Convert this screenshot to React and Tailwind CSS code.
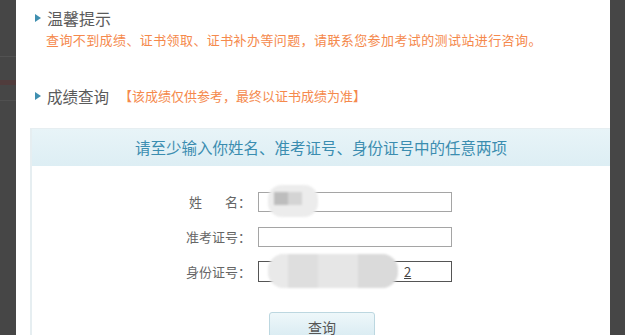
import React from "react";

const Tri = () => (
  <svg width="6" height="8" viewBox="0 0 6 8" className="shrink-0">
    <polygon points="0,0 6,4 0,8" fill="#3f8fb0" />
  </svg>
);

export default function App() {
  const font = { fontFamily: '"Noto Sans CJK SC", "Noto Sans", sans-serif' };
  return (
    <div className="flex h-[335px] w-[625px] overflow-hidden bg-white" style={font}>
      <div className="w-[16px] shrink-0 bg-[#464646] flex flex-col">
        <div className="h-[56px]" />
        <div className="h-[1px] bg-[#525252]" />
        <div className="h-[23px]" />
        <div className="h-[5px] bg-[#503c3c]" />
        <div className="h-[15px]" />
        <div className="h-[1px] bg-[#505050]" />
      </div>
      <div className="flex-1 relative flex flex-col pl-[14px]">
        <div className="flex items-center gap-[6px] pl-[5px] pt-[8px] h-[28px]">
          <Tri />
          <span className="text-[16px] leading-[20px] text-[#5a5a5a]">温馨提示</span>
        </div>
        <div className="pl-[16px] mt-[2px] text-[13px] leading-[20px] text-[#f5894c] tracking-[0.4px]">
          查询不到成绩、证书领取、证书补办等问题，请联系您参加考试的测试站进行咨询。
        </div>
        <div className="flex items-center gap-[6px] pl-[5px] mt-[36px] h-[20px]">
          <Tri />
          <span className="text-[15.5px] leading-[20px] text-[#5a5a5a]">成绩查询</span>
          <span className="ml-[4px] text-[13px] leading-[20px] text-[#f5894c]">【该成绩仅供参考，最终以证书成绩为准】</span>
        </div>
        <div className="ml-[2px] mt-[5px] h-[1px] bg-[#e4e4e4]" />
        <div className="mt-[17px] flex-1 border-l-2 border-t border-[#e6eef1] flex flex-col">
          <div className="h-[37px] flex items-center justify-center bg-gradient-to-b from-[#e8f4f8] to-[#ddeef4] text-[15.5px] text-[#3b8db0]">
            请至少输入你姓名、准考证号、身份证号中的任意两项
          </div>
          <div className="flex flex-col pt-[25px] gap-[14px]">
            <div className="flex items-center h-[21px]">
              <div className="w-[226px] pr-[7px] flex justify-end text-[13px] text-[#666]">
                <span className="flex w-[62px] justify-between"><span>姓</span><span>名：</span></span>
              </div>
              <div className="w-[194px] h-[20px] border border-[#a5a5a5]" />
            </div>
            <div className="flex items-center h-[21px]">
              <div className="w-[226px] pr-[7px] text-right text-[13px] text-[#666]">准考证号：</div>
              <div className="w-[194px] h-[20px] border border-[#a5a5a5]" />
            </div>
            <div className="flex items-center h-[21px]">
              <div className="w-[226px] pr-[7px] text-right text-[13px] text-[#666]">身份证号：</div>
              <div className="w-[194px] h-[21px] border border-[#555] flex items-center pl-[145px] text-[13px] leading-[14px] text-[#444]">
                <span className="underline">2</span>
              </div>
            </div>
          </div>
          <div className="pl-[237px] mt-[30px]">
            <div className="w-[106px] h-[30px] rounded-[3px] border border-[#bcd7e0] bg-gradient-to-b from-[#eef7fa] to-[#d6eaf1] flex items-center justify-center text-[14px] text-[#555]">
              查询
            </div>
          </div>
        </div>
        <div className="absolute left-[252px] top-[185px] w-[50px] h-[32px] rounded-[14px] bg-[#ececec] blur-[1px] overflow-hidden flex">
          <div className="ml-[6px] mt-[7px] w-[14px] h-[13px] bg-[#bdbdbd]" />
          <div className="mt-[7px] w-[14px] h-[13px] bg-[#d4d4d4]" />
        </div>
        <div className="absolute left-[252px] top-[254px] w-[130px] h-[34px] rounded-[16px] bg-[#e4e4e4] blur-[1px] flex overflow-hidden">
          <div className="w-[20px] bg-[#e9e9e9]" />
          <div className="w-[30px] bg-[#dedede]" />
          <div className="w-[40px] bg-[#e6e6e6]" />
          <div className="w-[40px] bg-[#dadada]" />
        </div>
      </div>
      <div className="w-[15px] shrink-0 bg-[#464646]" />
    </div>
  );
}
